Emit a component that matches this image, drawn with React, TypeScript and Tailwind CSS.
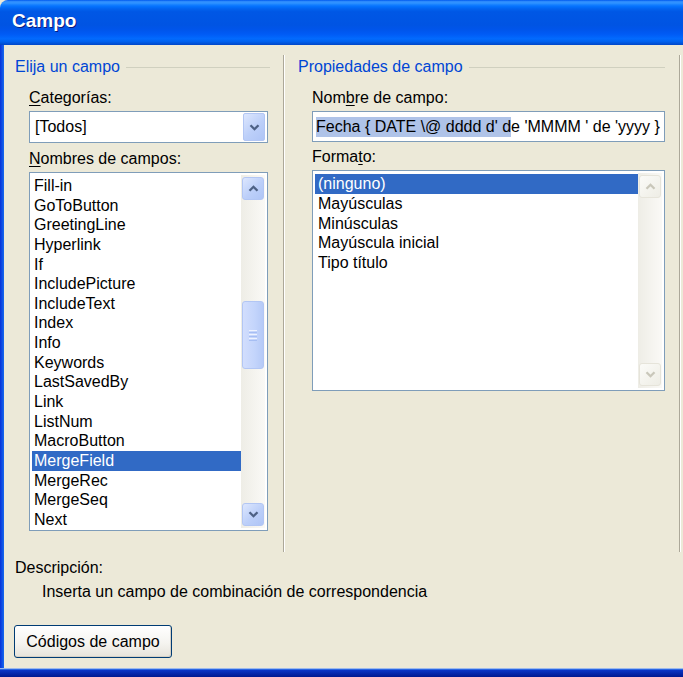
import React from "react";

const campos = [
  "Fill-in",
  "GoToButton",
  "GreetingLine",
  "Hyperlink",
  "If",
  "IncludePicture",
  "IncludeText",
  "Index",
  "Info",
  "Keywords",
  "LastSavedBy",
  "Link",
  "ListNum",
  "MacroButton",
  "MergeField",
  "MergeRec",
  "MergeSeq",
  "Next",
];

const formatos = [
  "(ninguno)",
  "Mayúsculas",
  "Minúsculas",
  "Mayúscula inicial",
  "Tipo título",
];

function Chevron({ up, disabled }: { up?: boolean; disabled?: boolean }) {
  return (
    <svg width="11" height="7" viewBox="0 0 11 7">
      <path
        d={up ? "M1.5 5.8 L5.5 1.8 L9.5 5.8" : "M1.5 1.2 L5.5 5.2 L9.5 1.2"}
        fill="none"
        stroke={disabled ? "#C9C7BA" : "#4D6185"}
        strokeWidth="2.3"
      />
    </svg>
  );
}

function ScrollBtn({ up, disabled }: { up?: boolean; disabled?: boolean }) {
  return (
    <div
      className={
        disabled
          ? "h-[23px] shrink-0 rounded-[3px] border border-[#E6E4DA] bg-[linear-gradient(135deg,#FBFBF8,#EEEDE5)] flex items-center justify-center"
          : "h-[23px] shrink-0 rounded-[3px] border border-[#B2C6F4] bg-[linear-gradient(135deg,#DDE7FE,#BCCFF9_55%,#AFC5F6)] flex items-center justify-center"
      }
    >
      <Chevron up={up} disabled={disabled} />
    </div>
  );
}

function ScrollBar({
  thumbTop,
  thumbHeight,
  disabled,
}: {
  thumbTop?: number;
  thumbHeight?: number;
  disabled?: boolean;
}) {
  return (
    <div className="w-[24px] shrink-0 flex flex-col bg-[linear-gradient(to_right,#EEEDE6,#FAF9F6)] px-[1px] py-[2px]">
      <ScrollBtn up disabled={disabled} />
      <div className="flex-1 flex flex-col">
        {!disabled && (
          <>
            <div style={{ height: thumbTop }} />
            <div
              className="rounded-[3px] border border-[#B2C6F4] bg-[linear-gradient(to_right,#D2DEFD,#C3D4FB_60%,#B6CAF7)] flex items-center justify-center"
              style={{ height: thumbHeight }}
            >
              <div className="w-[8px] flex flex-col gap-[1px]">
                <div className="h-px bg-[#EEF3FE]" />
                <div className="h-px bg-[#A6BEF3]" />
                <div className="h-px bg-[#EEF3FE]" />
                <div className="h-px bg-[#A6BEF3]" />
                <div className="h-px bg-[#EEF3FE]" />
                <div className="h-px bg-[#A6BEF3]" />
              </div>
            </div>
          </>
        )}
      </div>
      <ScrollBtn disabled={disabled} />
    </div>
  );
}

function GroupHeader({ title, pl, pr }: { title: string; pl: string; pr: string }) {
  return (
    <div className={`mt-[2px] h-[20px] flex items-center ${pl} ${pr}`}>
      <span className="text-[#0046D5] leading-[20px]">{title}</span>
      <div className="ml-[6px] flex-1 h-px bg-[#D0D0BF]" />
    </div>
  );
}

export default function App() {
  return (
    <div className="w-[683px] h-[677px] overflow-hidden flex flex-col bg-[#ECE9D8] font-['Liberation_Sans',Arial,sans-serif] text-[16px] text-black">
      {/* Title bar */}
      <div className="h-[45px] shrink-0 rounded-tl-[8px] flex items-center pl-[12px] pb-[3px] bg-[linear-gradient(to_bottom,#0058EE_0%,#3593FF_4%,#288EFF_8%,#127DFF_11%,#036FFC_15%,#0262EE_20%,#0057E5_26%,#0054E3_56%,#0055EB_66%,#005BF5_76%,#026AFE_86%,#0062EF_92%,#0046C8_100%)]">
        <span className="text-white font-bold text-[19px] [text-shadow:1px_1px_#0A1A80]">
          Campo
        </span>
      </div>

      <div className="flex flex-1 min-h-0">
        {/* Left window frame */}
        <div className="w-[4px] bg-[linear-gradient(to_right,#0831D9,#166AEE)]" />

        <div className="flex-1 flex flex-col">
          <div className="mt-[10px] flex h-[497px]">
            {/* Elija un campo */}
            <section className="w-[279px] flex flex-col">
              <GroupHeader title="Elija un campo" pl="pl-[11px]" pr="pr-[13px]" />
              <div className="pl-[25px] pr-[15px] flex flex-col">
                <div className="mt-[11px] h-[20px] leading-[20px]">
                  <span className="underline underline-offset-2">C</span>ategorías:
                </div>
                <div className="mt-[3px] h-[32px] border border-[#7F9DB9] bg-white flex items-center p-[1px] pr-[2px]">
                  <span className="flex-1 pl-[4px] leading-[20px]">[Todos]</span>
                  <div className="w-[22px] h-[28px] rounded-[2px] border border-[#B2C6F4] bg-[linear-gradient(135deg,#DDE7FE,#BCCFF9_55%,#AFC5F6)] flex items-center justify-center">
                    <Chevron />
                  </div>
                </div>
                <div className="mt-[6px] h-[20px] leading-[20px]">
                  <span className="underline underline-offset-2">N</span>ombres de campos:
                </div>
                <div className="mt-[3px] h-[359px] border border-[#7F9DB9] bg-white p-[2px] flex overflow-hidden">
                  <ul className="flex-1 pt-[1px] overflow-hidden">
                    {campos.map((c) => (
                      <li
                        key={c}
                        className={
                          c === "MergeField"
                            ? "h-[19.65px] leading-[19.65px] pl-[2px] bg-[#316AC5] text-white whitespace-nowrap"
                            : "h-[19.65px] leading-[19.65px] pl-[2px] whitespace-nowrap"
                        }
                      >
                        {c}
                      </li>
                    ))}
                  </ul>
                  <ScrollBar thumbTop={101} thumbHeight={68} />
                </div>
              </div>
            </section>

            <div className="w-px bg-[#ACA899]" />
            <div className="w-px bg-white" />

            {/* Propiedades de campo */}
            <section className="w-[394px] flex flex-col">
              <GroupHeader title="Propiedades de campo" pl="pl-[13px]" pr="pr-[14px]" />
              <div className="pl-[27px] pr-[14px] flex flex-col">
                <div className="mt-[11px] h-[20px] leading-[20px]">
                  Nom<span className="underline underline-offset-2">b</span>re de campo:
                </div>
                <div className="mt-[3px] h-[31px] border border-[#7F9DB9] bg-white flex items-center pl-[3px] overflow-hidden whitespace-nowrap">
                  <span className="bg-[#AFC3E8] leading-[20px]">Fecha {"{"} DATE \@ dddd d' d</span>
                  <span className="leading-[20px]">e 'MMMM ' de 'yyyy {"}"}</span>
                </div>
                <div className="mt-[5px] h-[20px] leading-[20px]">
                  Forma<span className="underline underline-offset-2">t</span>o:
                </div>
                <div className="mt-[3px] h-[221px] border border-[#7F9DB9] bg-white p-[2px] flex overflow-hidden">
                  <ul className="flex-1 pt-[1px]">
                    {formatos.map((f) => (
                      <li
                        key={f}
                        className={
                          f === "(ninguno)"
                            ? "h-[19.8px] leading-[19.8px] pl-[3px] bg-[#316AC5] text-white"
                            : "h-[19.8px] leading-[19.8px] pl-[3px]"
                        }
                      >
                        {f}
                      </li>
                    ))}
                  </ul>
                  <ScrollBar disabled />
                </div>
              </div>
            </section>

            <div className="w-px bg-[#ACA899]" />
            <div className="w-px bg-white" />
          </div>

          {/* Description */}
          <div className="pl-[11px] mt-[6px] h-[20px] leading-[20px]">Descripción:</div>
          <div className="pl-[38px] mt-[4px] h-[20px] leading-[20px]">
            Inserta un campo de combinación de correspondencia
          </div>
          <button className="mt-[23px] ml-[10px] w-[158px] h-[33px] rounded-[3px] border border-[#003C74] bg-[linear-gradient(to_bottom,#FFFFFF,#F5F4F0_55%,#E6E3DA)] shadow-[inset_-1px_-1px_0_#D6D0C5] flex items-center justify-center leading-[20px]">
            Códigos de campo
          </button>
        </div>
      </div>

      {/* Bottom window frame */}
      <div className="h-[9px] shrink-0 flex flex-col">
        <div className="h-px bg-[#9DB9EB]" />
        <div className="h-px bg-[#2A66E4]" />
        <div className="flex-1 bg-[linear-gradient(to_bottom,#0A36C8,#00188F)]" />
      </div>
    </div>
  );
}
